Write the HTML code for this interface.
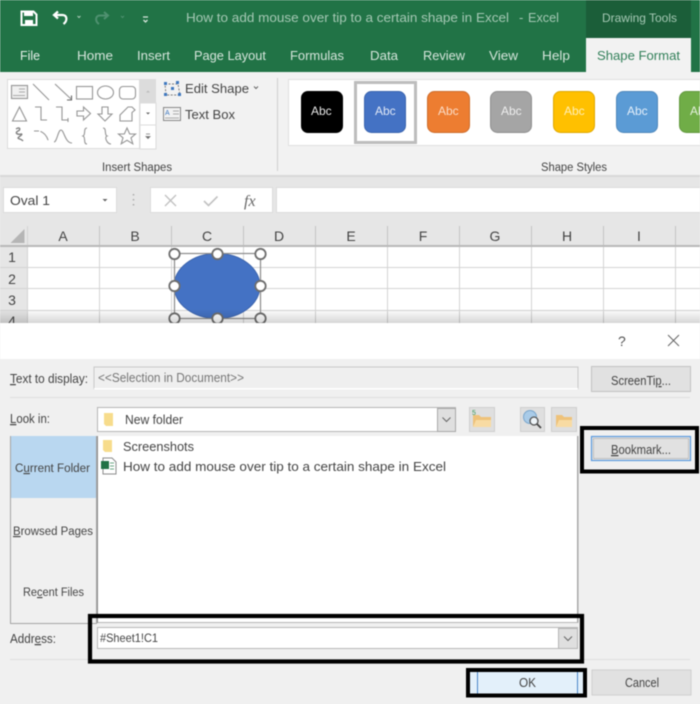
<!DOCTYPE html>
<html><head><meta charset="utf-8">
<style>
html,body{margin:0;padding:0;background:#f0f0f0}
body{width:700px;height:704px;overflow:hidden}
svg{display:block;filter:blur(.5px)}
text{font-family:"Liberation Sans",sans-serif;font-size:12.5px;fill:#444}
</style></head><body>
<svg width="700" height="704" viewBox="0 0 700 704" xmlns="http://www.w3.org/2000/svg">
<defs><linearGradient id="sh" x1="0" y1="0" x2="0" y2="1"><stop offset="0" stop-color="#000" stop-opacity="0"/><stop offset="1" stop-color="#000" stop-opacity=".16"/></linearGradient></defs>
<!-- title bar -->
<rect width="700" height="72" fill="#217346"/>
<rect x="586" width="105" height="38" fill="#1b5e39"/>
<rect x="586" y="38" width="105" height="34" fill="#f2f2f2"/>
<path d="M21.500 11.500h12l3 3v10.500h-15z" fill="none" stroke="#fff" stroke-width="2"/><rect x="24" y="11" width="9" height="5" fill="#fff"/><rect x="25" y="20" width="8" height="5" fill="#fff"/>
<path d="M58 11.500l-4 3.500 4 3.500M54.500 15h8c5 0 5 6 1 9" fill="none" stroke="#fff" stroke-width="2.200"/>
<path d="M77.500 16l1.500 1.500 1.500-1.500" fill="none" stroke="#a9c9b6"/>
<path d="M104 12l4 3.500-4 3.500M107 15.500h-7c-5 0-5 6-1 8.500" fill="none" stroke="#4f9170" stroke-width="2"/>
<path d="M121 16l1.500 1.500 1.500-1.500" fill="none" stroke="#4f9170"/>
<path d="M143 17h5M143.500 20l2 2 2-2" fill="none" stroke="#d8e6dd" stroke-width="1.300"/>
<text x="186" y="22" textLength="323" lengthAdjust="spacingAndGlyphs" style="fill:#a5c8b4;font-size:13px">How to add mouse over tip to a certain shape in Excel</text>
<text x="528" y="22" style="fill:#a5c8b4;font-size:13px" textLength="31" lengthAdjust="spacingAndGlyphs">Excel</text>
<text x="519" y="22" style="fill:#a5c8b4;font-size:13px">-</text>
<text x="602" y="22" textLength="75" lengthAdjust="spacingAndGlyphs" style="fill:#a5c8b4;font-size:12px">Drawing Tools</text>
<g>
<text x="20" y="60" textLength="20" lengthAdjust="spacingAndGlyphs" style="fill:#e6f0ea;font-size:13px">File</text>
<text x="77" y="60" textLength="36" lengthAdjust="spacingAndGlyphs" style="fill:#d5e5db;font-size:13px">Home</text>
<text x="137" y="60" textLength="33" lengthAdjust="spacingAndGlyphs" style="fill:#d5e5db;font-size:13px">Insert</text>
<text x="194" y="60" textLength="72" lengthAdjust="spacingAndGlyphs" style="fill:#d5e5db;font-size:13px">Page Layout</text>
<text x="290" y="60" textLength="54" lengthAdjust="spacingAndGlyphs" style="fill:#d5e5db;font-size:13px">Formulas</text>
<text x="370" y="60" textLength="28" lengthAdjust="spacingAndGlyphs" style="fill:#d5e5db;font-size:13px">Data</text>
<text x="423" y="60" textLength="42" lengthAdjust="spacingAndGlyphs" style="fill:#d5e5db;font-size:13px">Review</text>
<text x="489" y="60" textLength="29" lengthAdjust="spacingAndGlyphs" style="fill:#d5e5db;font-size:13px">View</text>
<text x="542" y="60" textLength="28" lengthAdjust="spacingAndGlyphs" style="fill:#d5e5db;font-size:13px">Help</text>
</g>
<text x="597" y="60" textLength="83" lengthAdjust="spacingAndGlyphs" style="fill:#33805a;font-size:13px">Shape Format</text>
<!-- ribbon -->
<rect y="72" width="700" height="105" fill="#f2f2f2"/>
<rect y="175" width="700" height="2" fill="#d8d8d8"/>
<rect x="7.500" y="79.500" width="132" height="69" fill="#fff" stroke="#dcdcdc"/>
<rect x="140" y="79" width="16" height="24" fill="#dcdcdc"/>
<rect x="140" y="103" width="16" height="46" fill="#fff" stroke="#dcdcdc"/>
<path d="M140 125h16" stroke="#dcdcdc"/>
<path d="M146 92.500l2-2 2 2z" fill="#bbb"/><path d="M146 112.500h4l-2 2z" fill="#666"/><path d="M146 134h4M146 136.500h4l-2 2z" stroke="#777" fill="#666" stroke-width=".8"/>
<g fill="none" stroke="#959595" stroke-width="1.100">
<rect x="11.500" y="85.500" width="16" height="13" fill="#f0f0f0"/><path d="M19 89h6M19 92h6M13 95.500h12" stroke="#aaa"/>
<path d="M33 84l16 16"/><path d="M55 84l16 15"/><path d="M67 100h4.500v-4.500" stroke="#666"/>
<rect x="76.500" y="86.500" width="16" height="12.500"/><ellipse cx="105.500" cy="92.500" rx="8" ry="6.500"/><rect x="119.500" y="86.500" width="16" height="12.500" rx="3.500"/>
<path d="M19.500 107l7 14h-14z"/>
<path d="M35 107h6v13h6"/><path d="M56 107h6v13h6M68 118v4"/>
<path d="M77 111h6.500v-4l7 6.500-7 6.500v-4h-6.500z"/><path d="M102 107h6v7h4l-7 7-7-7h4z"/><path d="M128 107h4l3 3-3 2.500v8.500h-12v-6z"/>
<path d="M16 129c4-3 5 1 2 2-4 2 0 4 3 3 3 0-3 3-3 4s4 1 5 3" stroke-width="1.400" stroke="#808080"/>
<path d="M34 131h5c5 1 9 6 10 13" stroke-dasharray="5 1.500 12"/><path d="M54 142c3 0 4-12 7-12s4 13 11 13"/>
<path d="M87 128c-4 0-1 7-4 8 3 1 0 8 4 8"/><path d="M103 128c4 0 1 7 4 8-3 1 0 8 4 8"/>
<path d="M127 128l2.700 6h5.800l-4.500 3.800 1.800 6-5.800-3.500-5.800 3.500 1.800-6-4.500-3.800h5.800z"/>
</g>
<!-- edit shape -->
<path d="M165 84h13l2 11-14 0z" fill="none" stroke="#7a7a7a" stroke-dasharray="2 1.500"/>
<g fill="#3f78bf"><rect x="164" y="82" width="3" height="3"/><rect x="176" y="81" width="3" height="3"/><rect x="171" y="87" width="3" height="3"/><rect x="164" y="93" width="3" height="3"/><rect x="178" y="93" width="3" height="3"/></g>
<text x="185" y="93" textLength="64" lengthAdjust="spacingAndGlyphs" style="font-size:13px">Edit Shape</text>
<path d="M254 86.500l2 2 2-2" fill="none" stroke="#666"/>
<rect x="163.500" y="107.500" width="17" height="13" fill="#f2f2f2" stroke="#888"/><path d="M173 111h6M173 114h6M165 118h14" stroke="#aaa"/><text x="165" y="115" style="font-size:7px;fill:#3f78bf">A</text>
<text x="185" y="119" textLength="50" lengthAdjust="spacingAndGlyphs" style="font-size:13px">Text Box</text>
<text x="102" y="171" textLength="70" lengthAdjust="spacingAndGlyphs" style="font-size:11.500px">Insert Shapes</text>
<rect x="277" y="78" width="1" height="93" fill="#cfcfcf"/>
<!-- styles -->
<rect x="288.500" y="79.500" width="412" height="66" fill="#fff" stroke="#e0e0e0"/>
<rect x="355.500" y="82.500" width="60" height="60" fill="#fff" stroke="#bdbdbd" stroke-width="3"/>
<rect x="301" y="91" width="42" height="42" rx="7" fill="#000"/>
<rect x="364.500" y="91.500" width="41" height="41" rx="7" fill="#4472c4" stroke="#3a64ae"/>
<rect x="427.500" y="91.500" width="42" height="41" rx="7" fill="#ed7d31" stroke="#cd6c2b"/>
<rect x="490.500" y="91.500" width="41" height="41" rx="7" fill="#a5a5a5" stroke="#8f8f8f"/>
<rect x="553.500" y="91.500" width="41" height="41" rx="7" fill="#ffc000" stroke="#dfa800"/>
<rect x="616.500" y="91.500" width="41" height="41" rx="7" fill="#5b9bd5" stroke="#4f88bb"/>
<rect x="679.500" y="91.500" width="40" height="41" rx="7" fill="#70ad47" stroke="#62983e"/>
<text x="311" y="115" style="fill:#e6e6e6;font-size:12px">Abc</text>
<text x="375" y="115" style="fill:#dfe7f5;font-size:12px">Abc</text>
<text x="438" y="115" style="fill:#fbdcc6;font-size:12px">Abc</text>
<text x="501" y="115" style="fill:#eee;font-size:12px">Abc</text>
<text x="564" y="115" style="fill:#ffeeb5;font-size:12px">Abc</text>
<text x="627" y="115" style="fill:#e4effa;font-size:12px">Abc</text>
<text x="690" y="115" style="fill:#e4f0dc;font-size:12px">Abc</text>
<text x="541" y="171" textLength="66" lengthAdjust="spacingAndGlyphs" style="font-size:11.500px">Shape Styles</text>
<!-- formula bar -->
<rect y="177" width="700" height="50" fill="#e6e6e6"/>
<rect x="3.500" y="187.500" width="113" height="25" fill="#fff" stroke="#dcdcdc"/>
<text x="10" y="205" textLength="40" lengthAdjust="spacingAndGlyphs" style="font-size:13px">Oval 1</text>
<path d="M102.500 199h5l-2.500 2.500z" fill="#666"/>
<path d="M133.500 194v1.500M133.500 199v1.500M133.500 204v1.500" stroke="#aaa" stroke-width="1.500"/>
<rect x="150.500" y="187.500" width="122" height="25" fill="#fff" stroke="#dcdcdc"/>
<path d="M165 195l11 11M176 195l-11 11" stroke="#c2c2c2" stroke-width="1.400"/>
<path d="M204 201l4.500 4.500 9-9" fill="none" stroke="#c2c2c2" stroke-width="1.600"/>
<text x="244" y="206" style="font-family:'Liberation Serif',serif;font-style:italic;font-size:16px;fill:#666">fx</text>
<rect x="276.500" y="187.500" width="424" height="25" fill="#fff" stroke="#dcdcdc"/>
<!-- grid -->
<rect y="226" width="700" height="97" fill="#fff"/>
<rect y="226" width="700" height="20" fill="#e6e6e6"/>
<rect y="226" width="27" height="97" fill="#e6e6e6"/>
<path d="M24.500 229v14h-14z" fill="#b5b5b5"/>
<g stroke="#d4d4d4" fill="none">
<path d="M27.500 226v97M99.500 246v77M171.500 246v77M243.500 246v77M315.500 246v77M387.500 246v77M459.500 246v77M531.500 246v77M603.500 246v77M675.500 246v77"/>
<path d="M0 267.500h700M0 288.500h700M0 310.500h700"/>
</g>
<path d="M99.500 226v20M171.500 226v20M243.500 226v20M315.500 226v20M387.500 226v20M459.500 226v20M531.500 226v20M603.500 226v20M675.500 226v20" stroke="#c4c4c4"/>
<rect y="245" width="700" height="2" fill="#b8b8b8"/>
<g text-anchor="middle">
<text x="63" y="241" style="font-size:14px">A</text><text x="135" y="241" style="font-size:14px">B</text><text x="207" y="241" style="font-size:14px">C</text><text x="279" y="241" style="font-size:14px">D</text><text x="351" y="241" style="font-size:14px">E</text><text x="423" y="241" style="font-size:14px">F</text><text x="495" y="241" style="font-size:14px">G</text><text x="567" y="241" style="font-size:14px">H</text><text x="639" y="241" style="font-size:14px">I</text>
<text x="12" y="262" style="font-size:14px">1</text><text x="12" y="284" style="font-size:14px">2</text><text x="12" y="305" style="font-size:14px">3</text><text x="12" y="326" style="font-size:14px">4</text>
</g>
<ellipse cx="217" cy="286" rx="43" ry="32.500" fill="#4472c4" stroke="#3c64ad"/>
<rect x="174.500" y="253.500" width="86" height="65" fill="none" stroke="#8a8a8a" stroke-width="1.200"/>
<g fill="#fff" stroke="#6e6e6e" stroke-width="1.800">
<circle cx="174.500" cy="254" r="5.200"/><circle cx="217.500" cy="254" r="5.200"/><circle cx="260.500" cy="254" r="5.200"/>
<circle cx="174.500" cy="286" r="5.200"/><circle cx="260.500" cy="286" r="5.200"/>
<circle cx="174.500" cy="318.500" r="5.200"/><circle cx="217.500" cy="318.500" r="5.200"/><circle cx="260.500" cy="318.500" r="5.200"/>
</g>
<rect y="309" width="700" height="14" fill="url(#sh)"/>
<!-- dialog -->
<rect y="323" width="700" height="36" fill="#fff"/>
<rect y="359" width="700" height="345" fill="#f0f0f0"/>
<text x="618" y="346" style="font-size:14px;fill:#555">?</text>
<path d="M668 335l11 11M679 335l-11 11" stroke="#666" stroke-width="1"/>
<text x="10" y="383" textLength="78" lengthAdjust="spacingAndGlyphs"><tspan text-decoration="underline">T</tspan>ext to display:</text>
<rect x="94" y="367" width="484" height="22" fill="#efefef" stroke="#c8c8c8"/>
<rect x="94" y="388" width="484" height="1.500" fill="#fff"/>
<text x="98" y="382" textLength="146" lengthAdjust="spacingAndGlyphs" style="fill:#777">&lt;&lt;Selection in Document&gt;&gt;</text>
<rect x="591.500" y="366.500" width="99" height="25" fill="#e1e1e1" stroke="#c2c2c2"/>
<text x="611" y="385" textLength="60" lengthAdjust="spacingAndGlyphs">ScreenTi<tspan text-decoration="underline">p</tspan>...</text>
<rect x="10" y="397" width="680" height="1" fill="#dfdfdf"/>
<text x="10" y="423" textLength="40" lengthAdjust="spacingAndGlyphs"><tspan text-decoration="underline">L</tspan>ook in:</text>
<rect x="97.500" y="407.500" width="358" height="24" fill="#fff" stroke="#b5b5b5"/>
<path d="M104 413h9v13h-7l-2-2z" fill="#f7dc8c"/>
<text x="125" y="424" textLength="58" lengthAdjust="spacingAndGlyphs">New folder</text>
<rect x="437.500" y="408.500" width="18" height="23" fill="#dfdfdf" stroke="#a8a8a8"/>
<path d="M442.500 417.500l4 4 4-4" fill="none" stroke="#666"/>
<rect x="469.500" y="407.500" width="25" height="24" fill="#dfdfdf" stroke="#cfcfcf"/>
<path d="M473 415h6l2 2h10v10h-18z" fill="#eec27a"/><path d="M473 427l3-7h15v7z" fill="#f8dba3"/><text x="472" y="415" style="font-size:7px;fill:#3a9a5c">5</text>
<rect x="520.500" y="407.500" width="24" height="24" fill="#dfdfdf" stroke="#cfcfcf"/>
<circle cx="530" cy="417" r="6.500" fill="#a9cbe8" stroke="#7aa6cc"/><circle cx="534" cy="421" r="4" fill="#eef4f8" stroke="#555" stroke-width="1.300"/><path d="M537 424l4 4" stroke="#444" stroke-width="1.800"/>
<rect x="551.500" y="407.500" width="25" height="24" fill="#dfdfdf" stroke="#cfcfcf"/>
<path d="M556 415h6l2 2h8v10h-16z" fill="#eec27a"/><path d="M556 427l3-7h13v7z" fill="#f8dba3"/>
<!-- list -->
<rect x="97" y="436" width="481" height="187" fill="#fff"/>
<rect x="577" y="436" width="1.500" height="187" fill="#a9a9a9"/>
<rect x="97" y="622" width="481" height="1" fill="#b5b5b5"/>
<rect x="96.500" y="436" width="1.500" height="187" fill="#8e8e8e"/>
<rect x="10.500" y="436.500" width="86" height="187" fill="#f0f0f0" stroke="#a5a5a5"/>
<rect x="11" y="436" width="85" height="62" fill="#b9d7f0"/>
<path d="M103 440h9v12h-7l-2-2z" fill="#f7dc8c"/>
<text x="123" y="451" textLength="71" lengthAdjust="spacingAndGlyphs" style="font-size:13px">Screenshots</text>
<path d="M103 458h9l4 4v12h-13z" fill="#fff" stroke="#8c8c8c"/><rect x="101" y="461" width="8" height="8" fill="#217346"/><path d="M110 463h4M110 466h4M110 469h4" stroke="#6aa583"/>
<text x="123" y="471" textLength="323" lengthAdjust="spacingAndGlyphs" style="font-size:13px">How to add mouse over tip to a certain shape in Excel</text>
<text x="15" y="472" textLength="75" lengthAdjust="spacingAndGlyphs" style="font-size:11.500px">C<tspan text-decoration="underline">u</tspan>rrent Folder</text>
<text x="13" y="535" textLength="80" lengthAdjust="spacingAndGlyphs" style="font-size:11.500px"><tspan text-decoration="underline">B</tspan>rowsed Pages</text>
<text x="23" y="596" textLength="61" lengthAdjust="spacingAndGlyphs" style="font-size:11.500px">Re<tspan text-decoration="underline">c</tspan>ent Files</text>
<!-- bookmark -->
<rect x="591.500" y="436.500" width="99" height="24" fill="#e1e1e1" stroke="#5a9ade" stroke-width="1.200"/>
<rect x="593.500" y="438.500" width="95" height="20" fill="none" stroke="#888" stroke-dasharray="1 1" stroke-width=".7"/>
<text x="611" y="454" textLength="60" lengthAdjust="spacingAndGlyphs"><tspan text-decoration="underline">B</tspan>ookmark...</text>
<rect x="582" y="428" width="115" height="43.500" fill="none" stroke="#000" stroke-width="4"/>
<!-- address -->
<text x="10" y="643" textLength="46" lengthAdjust="spacingAndGlyphs">Addr<tspan text-decoration="underline">e</tspan>ss:</text>
<rect x="97.500" y="627.500" width="480" height="21" fill="#fff" stroke="#b8b8b8"/>
<text x="100" y="642" textLength="58" lengthAdjust="spacingAndGlyphs" style="font-size:12px">#Sheet1!C1</text>
<rect x="558.500" y="628.500" width="19" height="20" fill="#dfdfdf" stroke="#b5b5b5"/>
<path d="M564 636.500l4 4 4-4" fill="none" stroke="#666"/>
<rect x="10" y="659" width="680" height="1" fill="#dfdfdf"/>
<rect x="90" y="616" width="492" height="45.500" fill="none" stroke="#000" stroke-width="4.200"/>
<!-- buttons -->
<rect x="468" y="670" width="117" height="25" fill="#e3f0fa"/>
<path d="M477.500 670v25M577.500 670v25" stroke="#4a86c8"/>
<text x="519" y="687" textLength="17" lengthAdjust="spacingAndGlyphs">OK</text>
<rect x="468" y="670" width="117" height="25.500" fill="none" stroke="#000" stroke-width="4"/>
<rect x="592" y="670" width="99" height="25" fill="#e1e1e1" stroke="#cfcfcf"/>
<text x="625" y="687" textLength="34" lengthAdjust="spacingAndGlyphs">Cancel</text>
</svg>
</body></html>
